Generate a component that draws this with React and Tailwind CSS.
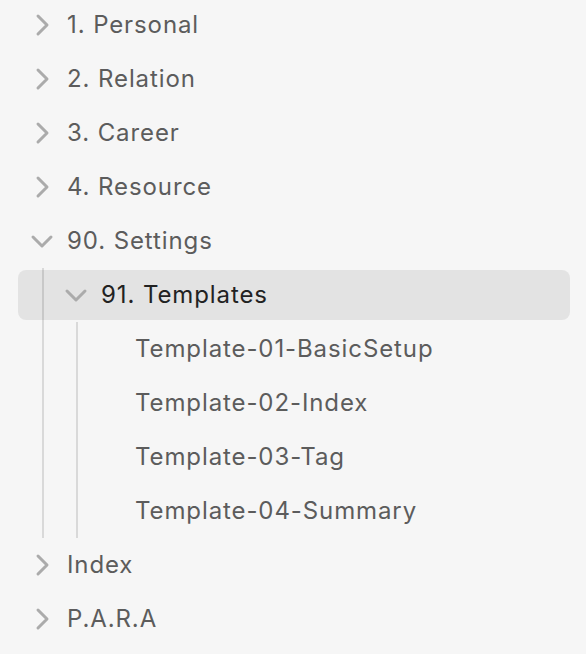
import React from "react";

function Chevron({ open }) {
  return (
    <div className="w-[24px] h-[24px] flex items-center justify-center shrink-0">
      <svg
        width="24"
        height="24"
        viewBox="0 0 24 24"
        fill="none"
        stroke="#ababab"
        strokeWidth="3"
        strokeLinecap="round"
        strokeLinejoin="round"
        className={open ? "" : "-rotate-90"}
      >
        <path d="M3 8L12 17L21 8" />
      </svg>
    </div>
  );
}

function FolderRow({ label, open = false, active = false, depth = 0 }) {
  const pad = depth === 0 ? "pl-[12px]" : "pl-[46px]";
  const shift = depth === 0 ? "" : "-ml-[26px]";
  return (
    <div className={`h-[54px] py-[2px] ${shift}`}>
      <div
        className={`h-[50px] rounded-[8px] flex items-center ${pad} ${
          active ? "bg-black/[0.075] text-[#222222]" : "text-[#5c5c5c]"
        }`}
      >
        <Chevron open={open} />
        <span className="ml-[13px] text-[24px] leading-none tracking-[0.9px] font-normal whitespace-nowrap">
          {label}
        </span>
      </div>
    </div>
  );
}

function FileRow({ label }) {
  return (
    <div className="h-[54px] py-[2px] -ml-[60px]">
      <div className="h-[50px] rounded-[8px] flex items-center pl-[117px] text-[#5c5c5c]">
        <span className="text-[24px] leading-none tracking-[0.9px] font-normal whitespace-nowrap">
          {label}
        </span>
      </div>
    </div>
  );
}

export default function App() {
  return (
    <div
      className="w-[586px] h-[654px] bg-[#f6f6f6] pl-[18px] pr-[16px] overflow-hidden"
      style={{ fontFamily: "Inter, 'Noto Sans', sans-serif" }}
    >
      <div className="-mt-[2px] flex flex-col">
        <FolderRow label="1. Personal" />
        <FolderRow label="2. Relation" />
        <FolderRow label="3. Career" />
        <FolderRow label="4. Resource" />
        <FolderRow label="90. Settings" open />
        <div className="ml-[24px] border-l-2 border-[#d9d9d9] flex flex-col">
          <FolderRow label="91. Templates" open active depth={1} />
          <div className="ml-[32px] border-l-2 border-[#d9d9d9] flex flex-col">
            <FileRow label="Template-01-BasicSetup" />
            <FileRow label="Template-02-Index" />
            <FileRow label="Template-03-Tag" />
            <FileRow label="Template-04-Summary" />
          </div>
        </div>
        <FolderRow label="Index" />
        <FolderRow label="P.A.R.A" />
      </div>
    </div>
  );
}
